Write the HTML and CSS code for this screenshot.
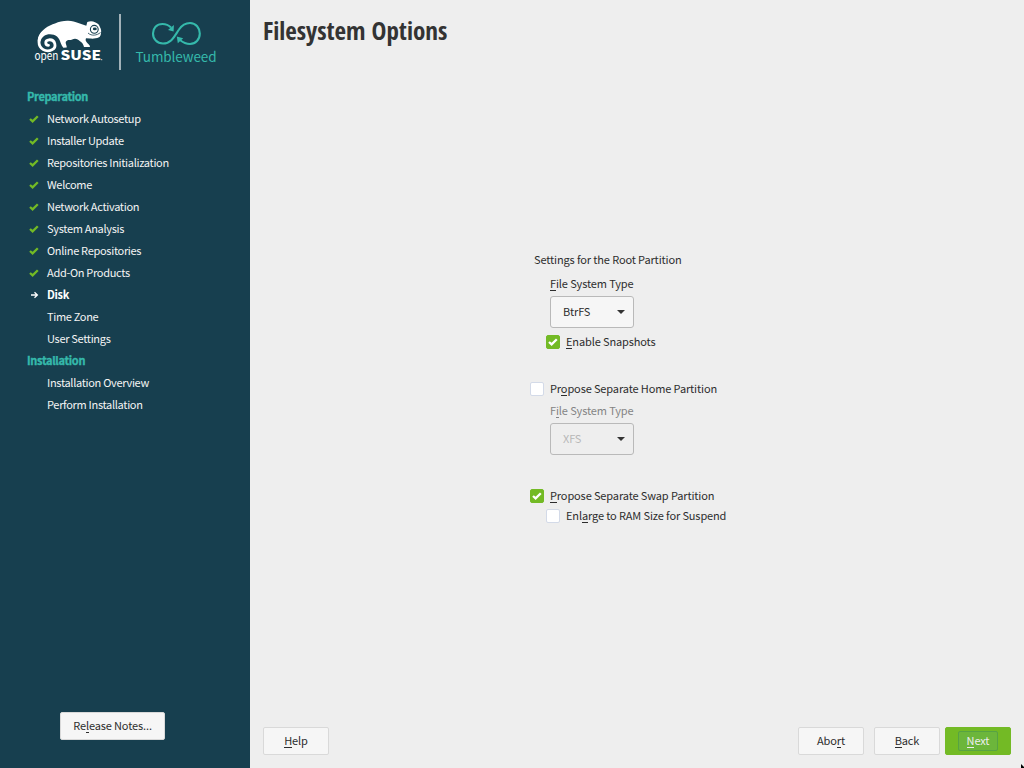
FILE: index.html
```html
<!DOCTYPE html>
<html lang="en">
<head>
<meta charset="utf-8">
<title>Filesystem Options</title>
<link rel="stylesheet" href="styles.css">
</head>
<body>
<svg class="symbols" aria-hidden="true">
  <symbol id="check" viewBox="0 0 10 8"><path d="M1 4 L3.6 6.4 L8.8 1.3" fill="none" stroke="currentColor" stroke-width="2.3"/></symbol>
</svg>
<div class="installer">
  <aside class="sidebar">
    <header class="brand">
      <svg class="suse" viewBox="0 0 84 62" width="84" height="62">
        <path fill="none" stroke="#fff" stroke-width="2.800" stroke-linecap="round" d="M20.500 31.300 C17 31.300 16.500 26.300 21 25.800 C27.500 25.300 29 33.500 24 35.800 C18 38.800 11 35 11 28 C11 22 15 18 20 16"/>
        <path fill="#fff" d="M9.700 27.300 C10 21 13 17.500 17 14.500 C20 12 24 10.500 27 9.500 C31 7.500 36 6.500 40.300 6.700 C44 6.900 47.500 7.900 50.300 9 L58.300 11.700 L59.300 8 C62 6.800 65 7 67 8.300 C70 9.500 71.500 11 72 13.300 C73 15 73.500 17 73 19 C72.800 21.500 72.200 22.500 71 23.300 C68 24.800 65 24.700 62 24.600 L58 24.300 C57.300 26 57.700 27 58.700 28.300 C60 30 62 31 62 33 L56 33 C55.500 30.500 54 28.500 52 27.300 C50.500 25.500 49 24.700 47 24.700 C44.500 24.700 43 26.700 40.300 25.900 C38.500 26.500 37.500 27.500 37.700 29 C38 31 39 32 38.700 33.400 L35.300 33.700 C34 32 33.500 31 32.700 29 C32 26.500 31 24.500 29 22.500 C25.500 19.500 19 19.500 16 22 C14 23.500 13 25.500 12.300 27.500Z"/>
        <circle cx="66.300" cy="15.300" r="3.900" fill="#fff" stroke="#173f4f" stroke-width="1.100"/>
        <ellipse cx="66.800" cy="14.900" rx="2" ry="1.300" fill="#173f4f"/>
        <path d="M60 19 C63.500 22.300 69 21.500 72.500 18.500" fill="none" stroke="#173f4f" stroke-width=".8"/>
        <text class="open" x="6.500" y="46.300" textLength="24" lengthAdjust="spacingAndGlyphs">open</text>
        <text class="suse-text" x="32.500" y="46.300" textLength="40.500" lengthAdjust="spacingAndGlyphs">SUSE</text>
        <rect x="73.200" y="45.200" width="1" height="1" fill="#fff"/>
      </svg>
      <span class="divider"></span>
      <div class="tumbleweed">
        <svg viewBox="0 0 56 30" width="56" height="30"><path fill="none" stroke="#35b9ab" stroke-width="2.100" d="M23 9.500 C20.500 7 17.500 6 14.500 6 C8.500 6 5 10 5 15.500 C5 21 9 25.500 15 25.500 C24 25.500 27 17 31 11.500 C34 7 37.500 5 42 5 C48 5 51.800 10 51.800 15.500 C51.800 21.500 47.500 26 42 26 C38 26 35 24.500 32 22"/><path d="M20 12 L25.900 7 L25.600 13.500Z M28.800 18.600 L35.200 20.300 L29.800 25.300Z" fill="#35b9ab"/></svg>
        <span>Tumbleweed</span>
      </div>
    </header>
    <ul class="steps">
      <li class="heading">Preparation</li>
      <li class="done"><svg><use href="#check"/></svg>Network Autosetup</li>
      <li class="done"><svg><use href="#check"/></svg>Installer Update</li>
      <li class="done"><svg><use href="#check"/></svg>Repositories Initialization</li>
      <li class="done"><svg><use href="#check"/></svg>Welcome</li>
      <li class="done"><svg><use href="#check"/></svg>Network Activation</li>
      <li class="done"><svg><use href="#check"/></svg>System Analysis</li>
      <li class="done"><svg><use href="#check"/></svg>Online Repositories</li>
      <li class="done"><svg><use href="#check"/></svg>Add-On Products</li>
      <li class="current"><svg viewBox="0 0 10 8"><path d="M2 4 H8.500 M5.500 1.200 L8.400 4 L5.500 6.800" fill="none" stroke="#fff" stroke-width="1.300"/></svg>Disk</li>
      <li>Time Zone</li>
      <li>User Settings</li>
      <li class="heading">Installation</li>
      <li>Installation Overview</li>
      <li>Perform Installation</li>
    </ul>
    <button class="btn notes">Re<u>l</u>ease Notes...</button>
  </aside>
  <main class="content">
    <h1>Filesystem Options</h1>
    <form class="options">
      <div class="section-title">Settings for the Root Partition</div>
      <div class="field-label"><span><u>F</u>ile System Type</span></div>
      <div class="select"><span>BtrFS</span><i class="arrow"></i></div>
      <div class="check inner snapshots"><span class="box on"><svg><use href="#check"/></svg></span><span class="label"><u>E</u>nable Snapshots</span></div>
      <div class="check home"><span class="box"></span><span class="label">Pr<u>o</u>pose Separate Home Partition</span></div>
      <div class="field-label dim"><span>F<u>i</u>le System Type</span></div>
      <div class="select disabled"><span>XFS</span><i class="arrow"></i></div>
      <div class="check swap"><span class="box on"><svg><use href="#check"/></svg></span><span class="label"><u>P</u>ropose Separate Swap Partition</span></div>
      <div class="check inner"><span class="box"></span><span class="label">Enl<u>a</u>rge to RAM Size for Suspend</span></div>
    </form>
    <footer class="actions">
      <button class="btn help"><u>H</u>elp</button>
      <button class="btn abort">Abo<u>r</u>t</button>
      <button class="btn back"><u>B</u>ack</button>
      <button class="btn next"><span class="focus"><u>N</u>ext</span></button>
    </footer>
  </main>
  <svg class="pointer" width="3" height="4" viewBox="0 0 3 4"><path d="M0 0 L3 3 V4 H0Z"/></svg>
</div>
</body>
</html>
```
FILE: styles.css
```css
* { box-sizing: border-box; }
body { margin: 0; font: 11px/16px "Noto Sans CJK SC", "Noto Sans", sans-serif; letter-spacing: -.13px; color: #2d2d2d; }
.symbols { display: none; }
.installer { position: relative; display: flex; width: 1024px; height: 768px; overflow: hidden; background: #eee; }
.sidebar { width: 250px; height: 768px; background: #173f4f; color: #eee; display: flex; flex-direction: column; }
.brand { height: 85px; display: flex; padding: 14px 0 0 28px; flex: none; }
.suse { flex: none; }
.open, .suse-text { fill: #fff; font-family: "Noto Sans CJK SC", sans-serif; font-size: 12px; letter-spacing: 0; }
.suse-text { font-weight: 900; font-size: 12.500px; }
.divider { width: 2px; height: 56px; background: #a2b2b9; margin-left: 7px; flex: none; }
.tumbleweed { color: #35b9ab; width: 110px; display: flex; flex-direction: column; align-items: center; font-size: 13.500px; line-height: 18px; padding-top: 4px; letter-spacing: -.1px; }
.tumbleweed span { margin-top: -1px; }
.steps { list-style: none; margin: 0; padding: 0; letter-spacing: -.31px; color: #f4f4f4; }
.steps li { height: 22px; line-height: 22px; padding-left: 47px; display: flex; align-items: center; white-space: pre; }
.steps svg { width: 10px; height: 8px; margin: 2px 8px 0 -18px; color: #73ba25; flex: none; }
.steps .heading { padding-left: 27px; font-weight: 700; color: #35b9ab; -webkit-text-stroke: .35px #35b9ab; }
.steps .current { font-weight: 700; color: #fff; }
.btn { font: inherit; letter-spacing: inherit; color: #2d2d2d; background: #f6f6f6; border: 1px solid #d9d9d9; border-radius: 2px; height: 28px; width: 66px; padding: 0 0 2px; display: flex; align-items: center; justify-content: center; white-space: pre; }
.notes { width: 105px; margin: auto 0 28px 60px; letter-spacing: -.13px; }
u { text-decoration: none; box-shadow: 0 -1px 0 currentColor inset; }
.content { flex: 1; display: flex; flex-direction: column; padding: 12px 13px 13px; }
h1 { margin: 0; font: 700 25px/36px "Open Sans Condensed", "Open Sans", sans-serif; font-stretch: 75%; letter-spacing: -.02px; white-space: nowrap; color: #333; }
.options { margin: 203px 0 0 267px; }
.section-title { padding-left: 4px; }
.field-label { padding-left: 20px; margin: 8px 0 5px; }
.select { margin-left: 20px; width: 84px; height: 32px; border: 1px solid #b9b9b9; border-radius: 3px; background: #f6f6f6; display: flex; align-items: center; justify-content: space-between; padding: 0 8px 0 12px; }
.select span { padding-bottom: 2px; }
.arrow { border: 4px solid transparent; border-top-color: #333; border-bottom: 0; }
.check { height: 20px; display: flex; align-items: center; gap: 6px; white-space: pre; }
.label { padding-bottom: 2px; }
.inner { padding-left: 16px; }
.snapshots { margin-top: 4px; }
.home { margin-top: 27px; }
.box { width: 14px; height: 14px; border: 1px solid #d3dae8; border-radius: 2px; background: #fff; display: flex; align-items: center; justify-content: center; }
.box.on { background: #73ba25; border-color: #73ba25; color: #fff; }
.box svg { width: 10px; height: 8px; }
.dim { color: #848484; margin-top: 3px; }
.disabled { background: #eee; color: #b8b8b8; }
.swap { margin-top: 31px; }
.actions { margin-top: auto; display: flex; align-items: center; }
.abort { margin-left: auto; }
.back { margin-left: 10px; }
.next { margin-left: 5px; padding: 0; background: #73ba25; border-color: #73ba25; color: #eee; }
.focus { width: 40px; height: 20px; padding-bottom: 2px; border: 1px solid #57a343; border-radius: 2px; background: #6cb63b; display: flex; align-items: center; justify-content: center; }
.pointer { position: absolute; right: 0; bottom: 0; }
```
